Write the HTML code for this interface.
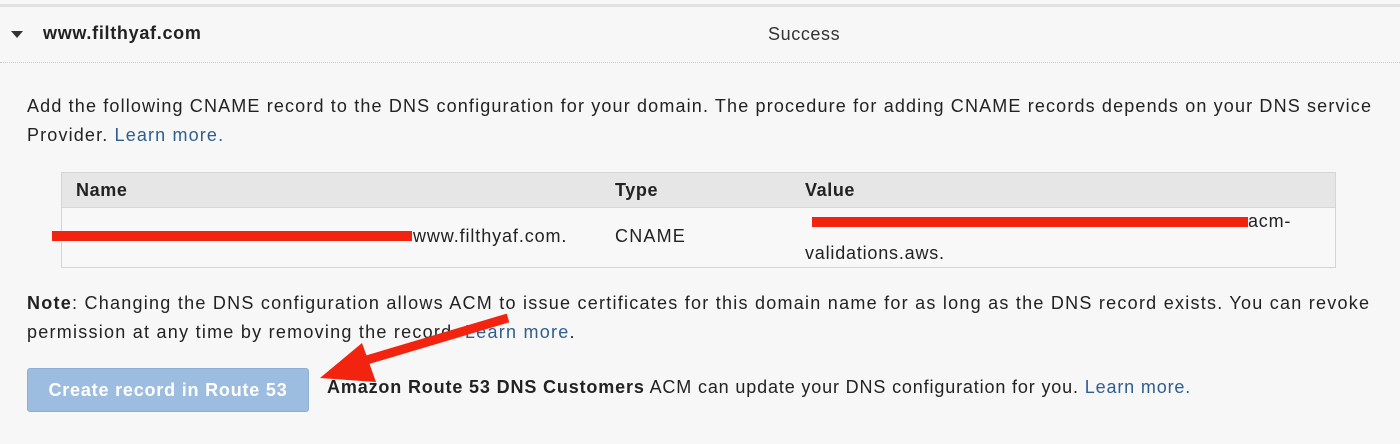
<!DOCTYPE html>
<html><head><meta charset="utf-8"><style>
body{margin:0;width:1400px;height:444px;background:#f7f7f7;font-family:"Liberation Sans",Arial,sans-serif;color:#222;position:relative;overflow:hidden}
.a{position:absolute;white-space:nowrap;letter-spacing:1px}
.l{color:#2f5d8f}
</style></head><body>
<div class="a" style="left:0;top:4px;width:1400px;height:3px;background:#e2e2e2"></div>
<div class="a" style="left:0;top:62px;width:1400px;border-top:1px dotted #c8c8c8"></div>
<div class="a" style="left:11px;top:31px;width:0;height:0;border-left:6px solid transparent;border-right:6px solid transparent;border-top:7px solid #333"></div>
<div class="a" style="left:43px;top:23px;font-size:18px;font-weight:bold;color:#222;letter-spacing:0.7px">www.filthyaf.com</div>
<div class="a" style="left:768px;top:24px;font-size:18px;color:#333;letter-spacing:0.6px">Success</div>
<div class="a" style="left:27px;top:92px;font-size:18px;line-height:29px;letter-spacing:1.15px">Add the following CNAME record to the DNS configuration for your domain. The procedure for adding CNAME records depends on your DNS service<br>Provider. <span class="l">Learn more.</span></div>
<div class="a" style="left:61px;top:172px;width:1273px;height:94px;border:1px solid #d5d5d5;background:#f8f8f8"></div>
<div class="a" style="left:62px;top:173px;width:1273px;height:34px;background:#e6e6e6;border-bottom:1px solid #d8d8d8"></div>
<div class="a" style="left:76px;top:180px;font-size:18px;font-weight:bold;letter-spacing:0.6px">Name</div>
<div class="a" style="left:615px;top:180px;font-size:18px;font-weight:bold;letter-spacing:0.6px">Type</div>
<div class="a" style="left:805px;top:180px;font-size:18px;font-weight:bold;letter-spacing:0.6px">Value</div>
<div class="a" style="left:413px;top:226px;font-size:18px;letter-spacing:0.9px">www.filthyaf.com.</div>
<div class="a" style="left:615px;top:226px;font-size:18px;letter-spacing:1.2px">CNAME</div>
<div class="a" style="left:1248px;top:211px;font-size:18px;letter-spacing:0.8px">acm-</div>
<div class="a" style="left:805px;top:243px;font-size:18px;letter-spacing:0.8px">validations.aws.</div>
<div class="a" style="left:52px;top:231px;width:360px;height:10px;background:#f2230f"></div>
<div class="a" style="left:812px;top:217px;width:436px;height:10px;background:#f2230f"></div>
<div class="a" style="left:27px;top:289px;font-size:18px;line-height:29px;letter-spacing:1.25px"><b>Note</b>: Changing the DNS configuration allows ACM to issue certificates for this domain name for as long as the DNS record exists. You can revoke<br>permission at any time by removing the record. <span class="l">Learn more</span>.</div>
<div class="a" style="left:27px;top:368px;width:280px;height:42px;background:#9dbde0;border:1px solid #8fb0d6;border-radius:3px;color:#fff;font-weight:bold;font-size:18px;line-height:42px;text-align:center;letter-spacing:0.8px">Create record in Route 53</div>
<div class="a" style="left:327px;top:377px;font-size:18px;letter-spacing:0.85px"><b>Amazon Route 53 DNS Customers</b> ACM can update your DNS configuration for you. <span class="l">Learn more.</span></div>
<svg class="a" style="left:0;top:0" width="1400" height="444"><line x1="508" y1="318" x2="360" y2="362" stroke="#f2230f" stroke-width="9"/><polygon points="320,378 362,343 376,382" fill="#f2230f"/></svg>
</body></html>
